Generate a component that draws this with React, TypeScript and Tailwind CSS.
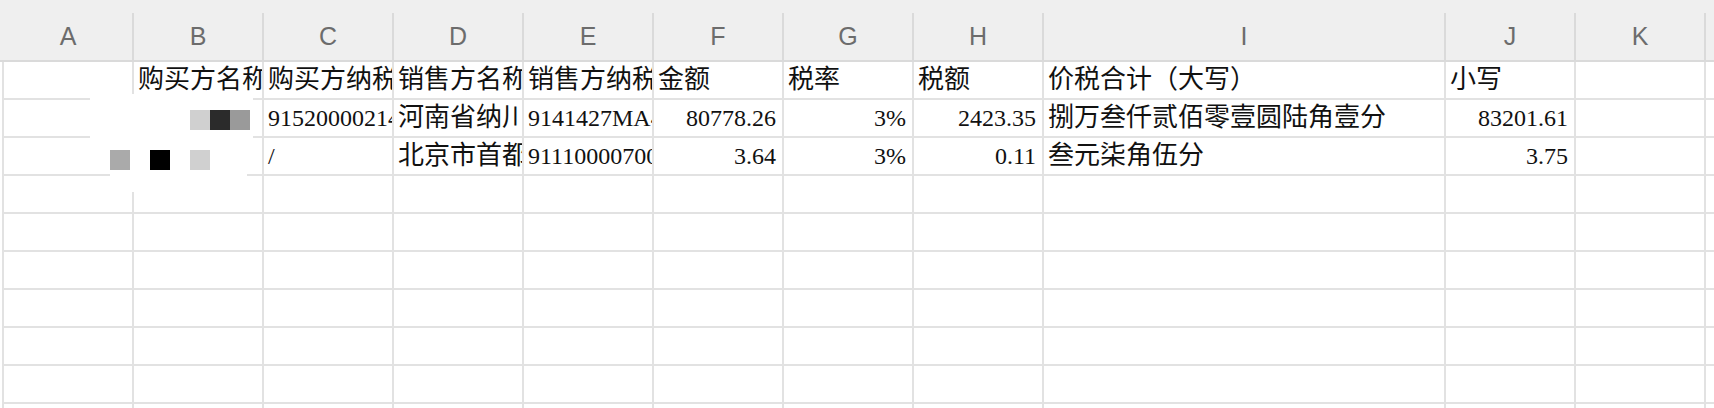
import React from "react";

const cols = [
  { key: "A", w: "w-[130px]" },
  { key: "B", w: "w-[130px]" },
  { key: "C", w: "w-[130px]" },
  { key: "D", w: "w-[130px]" },
  { key: "E", w: "w-[130px]" },
  { key: "F", w: "w-[130px]" },
  { key: "G", w: "w-[130px]" },
  { key: "H", w: "w-[130px]" },
  { key: "I", w: "w-[402px]" },
  { key: "J", w: "w-[130px]" },
  { key: "K", w: "w-[130px]" },
];

type Cell = { t: string; r?: boolean; cjk?: boolean };

const rows: Cell[][] = [
  [
    { t: "" },
    { t: "购买方名称", cjk: true },
    { t: "购买方纳税人识别号", cjk: true },
    { t: "销售方名称", cjk: true },
    { t: "销售方纳税人识别号", cjk: true },
    { t: "金额", cjk: true },
    { t: "税率", cjk: true },
    { t: "税额", cjk: true },
    { t: "价税合计（大写）", cjk: true },
    { t: "小写", cjk: true },
    { t: "" },
  ],
  [
    { t: "" },
    { t: "" },
    { t: "915200002145" },
    { t: "河南省纳川有限公司", cjk: true },
    { t: "9141427MA46" },
    { t: "80778.26", r: true },
    { t: "3%", r: true },
    { t: "2423.35", r: true },
    { t: "捌万叁仟贰佰零壹圆陆角壹分", cjk: true },
    { t: "83201.61", r: true },
    { t: "" },
  ],
  [
    { t: "" },
    { t: "" },
    { t: "/" },
    { t: "北京市首都有限公司", cjk: true },
    { t: "911100007000" },
    { t: "3.64", r: true },
    { t: "3%", r: true },
    { t: "0.11", r: true },
    { t: "叁元柒角伍分", cjk: true },
    { t: "3.75", r: true },
    { t: "" },
  ],
];

const emptyRows = 7;

function Block({ c }: { c: string }) {
  return <div className={`w-[20px] h-[20px] ${c}`} />;
}

export default function App() {
  const allRows: Cell[][] = [
    ...rows,
    ...Array.from({ length: emptyRows }, () => cols.map(() => ({ t: "" }))),
  ];
  return (
    <div className="relative w-[1714px] h-[408px] overflow-hidden bg-white font-['Liberation_Serif','Noto_Sans_CJK_SC',serif] text-[#111]">
      {/* column header */}
      <div className="h-[62px] bg-[#efefef] pt-[13px] border-b-2 border-[#dadada]">
        <div className="flex h-full pl-[4px]">
          {cols.map((c) => (
            <div
              key={c.key}
              className={`${c.w} shrink-0 h-full border-r-2 border-[#dadada] flex items-center justify-center font-['Liberation_Sans',Arial,sans-serif] text-[25px] text-[#6c6c6c]`}
            >
              {c.key}
            </div>
          ))}
        </div>
      </div>
      {/* body */}
      <div className="ml-[2px] border-l-2 border-[#e2e2e2]">
        {allRows.map((row, ri) => (
          <div key={ri} className="flex h-[38px] border-b-2 border-[#e2e2e2]">
            {row.map((cell, ci) => (
              <div
                key={ci}
                className={`${cols[ci].w} shrink-0 h-full border-r-2 border-[#e2e2e2] overflow-hidden whitespace-nowrap flex items-center leading-none ${
                  cell.cjk ? "text-[26px]" : "text-[24px]"
                } ${cell.r ? "justify-end pr-[6px]" : "justify-start pl-[4px]"}`}
              >
                {cell.t}
              </div>
            ))}
          </div>
        ))}
      </div>

      {/* redaction overlay */}
      <div className="absolute left-[90px] top-[94px] w-[163px] h-[78px] bg-white flex flex-col pt-[16px] gap-[20px]">
        <div className="flex pl-[100px]">
          <Block c="bg-[#d0d0d0]" />
          <Block c="bg-[#2b2b2b]" />
          <Block c="bg-[#9a9a9a]" />
        </div>
        <div className="flex pl-[20px] gap-[20px]">
          <Block c="bg-[#aaaaaa]" />
          <Block c="bg-[#000000]" />
          <Block c="bg-[#d0d0d0]" />
        </div>
      </div>
      <div className="absolute left-[110px] top-[172px] w-[137px] h-[20px] bg-white" />
    </div>
  );
}
